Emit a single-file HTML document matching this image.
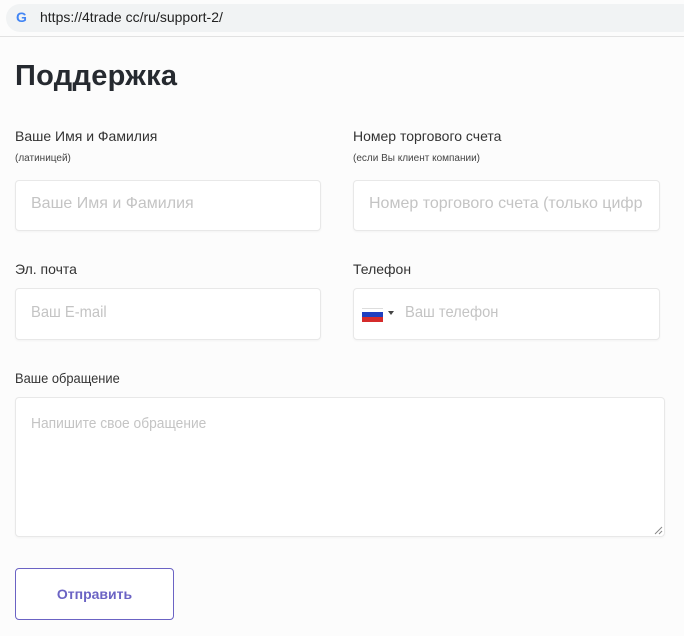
<!DOCTYPE html>
<html><head><meta charset="utf-8"><style>
*{box-sizing:border-box;margin:0;padding:0}
body{width:684px;height:636px;background:#fcfcfc;font-family:"Liberation Sans",sans-serif;color:#333;position:relative;overflow:hidden}
.bar{position:absolute;left:6px;top:4px;width:690px;height:28px;background:#f1f3f4;border-radius:14px}
.line{position:absolute;left:0;top:36px;width:684px;height:1px;background:#e2e2e2}
.url{position:absolute;left:40px;top:9px;font-size:14px;color:#222}
.g{position:absolute;left:16px;top:9px;font-size:14px;font-weight:bold;color:#4285f4}
h1{position:absolute;left:15px;top:60px;font-size:29px;font-weight:bold;color:#262a30;letter-spacing:0.3px}
.lb{position:absolute;font-size:14px;color:#333}
.sm{position:absolute;font-size:10px;color:#444}
.in{position:absolute;background:#fff;border:1px solid #e8e8e8;border-radius:4px;box-shadow:0 1px 2px rgba(0,0,0,.04)}
.ph{position:absolute;font-size:16px;color:#c4c4c4;white-space:nowrap;overflow:hidden}
.btn{position:absolute;left:15px;top:568px;width:159px;height:52px;border:1px solid #6b63c4;border-radius:4px;background:#fff;color:#6b63c4;font-weight:bold;font-size:14px;text-align:center;line-height:50px}
</style></head><body>
<div class="bar"></div><div class="line"></div>
<div class="g">G</div><div class="url">https://4trade cc/ru/support-2/</div>
<h1>Поддержка</h1>
<div class="lb" style="left:15px;top:128px">Ваше Имя и Фамилия</div>
<div class="sm" style="left:15px;top:153px">(латиницей)</div>
<div class="lb" style="left:353px;top:128px">Номер торгового счета</div>
<div class="sm" style="left:353px;top:153px">(если Вы клиент компании)</div>
<div class="in" style="left:15px;top:180px;width:306px;height:51px"></div>
<div class="ph" style="left:31px;top:195px">Ваше Имя и Фамилия</div>
<div class="in" style="left:353px;top:180px;width:307px;height:51px"></div>
<div class="ph" style="left:369px;top:195px;width:277px">Номер торгового счета (только цифр</div>
<div class="lb" style="left:15px;top:261px">Эл. почта</div>
<div class="lb" style="left:353px;top:261px">Телефон</div>
<div class="in" style="left:15px;top:288px;width:306px;height:52px"></div>
<div class="ph" style="left:31px;top:304px;transform:scaleX(.92);transform-origin:left">Ваш E-mail</div>
<div class="in" style="left:353px;top:288px;width:307px;height:52px"></div>
<div style="position:absolute;left:362px;top:308px;width:21px;height:14px">
<div style="height:4px;background:#fff;border-top:1px solid #ddd"></div><div style="height:5px;background:#1f3fbf"></div><div style="height:5px;background:#d52b2b"></div></div>
<div style="position:absolute;left:388px;top:311px;width:0;height:0;border-left:3px solid transparent;border-right:3px solid transparent;border-top:4px solid #444"></div>
<div class="ph" style="left:405px;top:304px;transform:scaleX(.92);transform-origin:left">Ваш телефон</div>
<div class="lb" style="left:15px;top:370px;transform:scaleX(.92);transform-origin:left">Ваше обращение</div>
<div class="in" style="left:15px;top:397px;width:650px;height:140px"></div>
<div class="ph" style="left:31px;top:415px;font-size:15px;transform:scaleX(.92);transform-origin:left">Напишите свое обращение</div>
<svg style="position:absolute;left:654px;top:526px" width="9" height="9"><path d="M8 1L1 8M8 5L5 8" stroke="#888" stroke-width="1"/></svg>
<div class="btn">Отправить</div>
</body></html>
